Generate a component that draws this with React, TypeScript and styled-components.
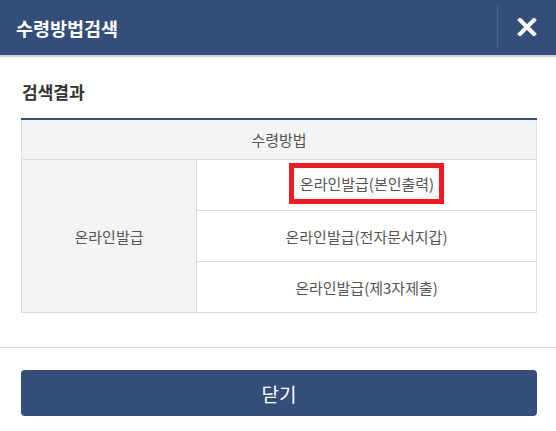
import React from "react";
import styled, { createGlobalStyle } from "styled-components";

const GlobalStyle = createGlobalStyle`
  html, body {
    margin: 0;
    padding: 0;
    background: #fff;
  }
  body {
    font-family: "Noto Sans CJK KR", "Noto Sans", "Liberation Sans", sans-serif;
  }
`;

const NAVY = "#344d79";

const Modal = styled.div`
  width: 556px;
  height: 431px;
  display: flex;
  flex-direction: column;
  background: #fff;
  overflow: hidden;
`;

const Header = styled.header`
  height: 55px;
  display: flex;
  align-items: center;
  background: ${NAVY};
  border-bottom: 2px solid #d2d2d2;
`;

const Title = styled.h1`
  flex: 1;
  margin: 0;
  padding-left: 16px;
  font-size: 18.5px;
  font-weight: 700;
  line-height: 24px;
  color: #fff;
`;

const CloseButton = styled.button`
  width: 59px;
  height: 44px;
  margin-bottom: 2px;
  display: flex;
  align-items: center;
  justify-content: center;
  padding: 0;
  border: 0;
  border-left: 1px solid #4a6290;
  background: transparent;
  cursor: pointer;
`;

const Body = styled.section`
  padding: 23px 19px 0 21px;
  flex: 1;
`;

const SectionTitle = styled.h2`
  margin: 0 0 14px 1px;
  font-size: 17px;
  font-weight: 700;
  line-height: 24px;
  color: #333;
`;

const Table = styled.table`
  width: 100%;
  border-collapse: collapse;
  border-top: 2px solid ${NAVY};
  font-size: 15px;
  color: #555;
`;

const HeadCell = styled.th`
  height: 39px;
  padding: 0;
  background: #f4f4f4;
  border: 1px solid #dcdcdc;
  border-top: 0;
  font-weight: 400;
  text-align: center;
`;

const Cell = styled.td<{ $shaded?: boolean }>`
  height: 50px;
  padding: 0;
  border: 1px solid #dcdcdc;
  text-align: center;
  background: ${(p) => (p.$shaded ? "#f4f4f4" : "#fff")};
  width: ${(p) => (p.$shaded ? "174px" : "auto")};
`;

const Highlight = styled.span`
  display: inline-block;
  vertical-align: middle;
  padding: 5px 5px 5px 6px;
  margin: 0 0 4px 0;
  line-height: 21px;
  border: 5px solid #ed1c24;
`;

const Footer = styled.footer`
  border-top: 1px solid #d6d6d6;
  padding: 22px 19px 15px 21px;
`;

const ConfirmButton = styled.button`
  width: 100%;
  height: 46px;
  border: 0;
  border-radius: 4px;
  background: ${NAVY};
  color: #fff;
  font-family: inherit;
  font-size: 19px;
  cursor: pointer;
`;

const methods = ["온라인발급(본인출력)", "온라인발급(전자문서지갑)", "온라인발급(제3자제출)"];

export default function App() {
  return (
    <>
      <GlobalStyle />
      <Modal>
        <Header>
          <Title>수령방법검색</Title>
          <CloseButton aria-label="닫기">
            <svg width="20" height="18" viewBox="0 0 20 18">
              <path d="M3 2 L17 16 M17 2 L3 16" stroke="#fff" strokeWidth="4" strokeLinecap="square" />
            </svg>
          </CloseButton>
        </Header>
        <Body>
          <SectionTitle>검색결과</SectionTitle>
          <Table>
            <thead>
              <tr>
                <HeadCell colSpan={2}>수령방법</HeadCell>
              </tr>
            </thead>
            <tbody>
              {methods.map((m, i) => (
                <tr key={m}>
                  {i === 0 && (
                    <Cell $shaded rowSpan={methods.length}>
                      온라인발급
                    </Cell>
                  )}
                  <Cell>{i === 0 ? <Highlight>{m}</Highlight> : m}</Cell>
                </tr>
              ))}
            </tbody>
          </Table>
        </Body>
        <Footer>
          <ConfirmButton>닫기</ConfirmButton>
        </Footer>
      </Modal>
    </>
  );
}
